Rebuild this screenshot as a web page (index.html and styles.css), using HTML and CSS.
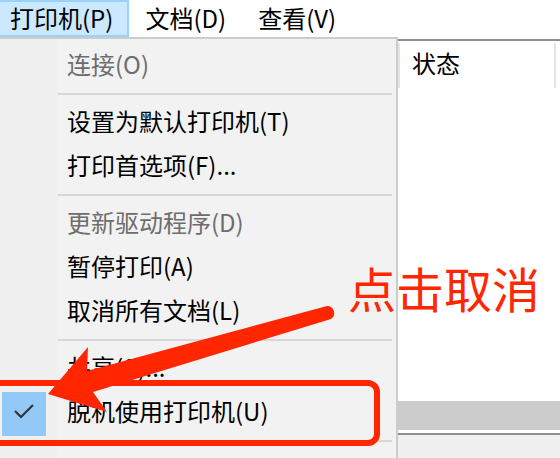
FILE: index.html
```html
<!DOCTYPE html>
<html lang="zh-CN">
  <head>
    <meta charset="UTF-8" />
    <title>打印机队列</title>
    <link rel="stylesheet" href="styles.css">
  </head>
  <body>
    <div class="page">
      <nav class="menubar">
        <span class="menubar-item active">打印机(P)</span>
        <span class="menubar-item">文档(D)</span>
        <span class="menubar-item">查看(V)</span>
      </nav>

      <div class="workspace">
        <!-- print queue window behind the open menu -->
        <div class="listview">
          <div class="list-header">
            <div class="col col-name"></div>
            <div class="col col-status">状态</div>
          </div>
          <div class="list-body"></div>
          <div class="hscroll"></div>
          <div class="statusbar"></div>
        </div>

        <ul class="menu">
          <li class="menu-item disabled"><span class="mark"></span><span class="label">连接(O)</span></li>
          <li class="menu-sep"></li>
          <li class="menu-item"><span class="mark"></span><span class="label">设置为默认打印机(T)</span></li>
          <li class="menu-item"><span class="mark"></span><span class="label">打印首选项(F)...</span></li>
          <li class="menu-sep"></li>
          <li class="menu-item disabled"><span class="mark"></span><span class="label">更新驱动程序(D)</span></li>
          <li class="menu-item"><span class="mark"></span><span class="label">暂停打印(A)</span></li>
          <li class="menu-item"><span class="mark"></span><span class="label">取消所有文档(L)</span></li>
          <li class="menu-sep"></li>
          <li class="menu-item"><span class="mark"></span><span class="label">共享(S)...</span></li>
          <li class="menu-item checked">
            <span class="mark">
              <svg width="44" height="44" viewBox="0 0 44 44">
                <path d="M13 19 L19 25 L31 13" fill="none" stroke="#333" stroke-width="2.2" />
              </svg>
            </span>
            <span class="label">脱机使用打印机(U)</span>
          </li>
          <li class="menu-sep"></li>
        </ul>
      </div>

      <!-- red annotations -->
      <div class="callout-box"></div>
      <div class="callout-text">点击取消</div>
      <svg class="callout-arrow" width="560" height="458" viewBox="0 0 560 458">
        <path d="M48 394 L88 347 L87 371 L327 306 A7.1 7.1 0 0 1 331 319 L93 392 L107 412 Z" fill="#ff2600" />
      </svg>
    </div>
  </body>
</html>
```

FILE: styles.css
```css
body {
  margin: 0;
  background-color: #ffffff;
  font-family: "Noto Sans CJK SC", "Noto Sans", sans-serif;
  font-size: 24px;
  color: #000000;
}

.page {
  position: relative;
  width: 560px;
  height: 458px;
  overflow: hidden;
}

/* top menu bar */
.menubar {
  display: flex;
  height: 37px;
  margin-left: -6px;
}

.menubar-item {
  height: 33px;
  line-height: 31px;
  padding: 0 14px;
  border: 2px solid transparent;
  white-space: nowrap;
}

.menubar-item.active {
  background-color: #cce8ff;
  border-color: #99d1ff;
}

.workspace {
  position: relative;
  height: 421px;
}

/* list view of the print queue */
.listview {
  display: flex;
  flex-direction: column;
  height: 100%;
  padding-top: 2px;
  box-sizing: border-box;
}

.list-header {
  display: flex;
  height: 49px;
  border-top: 2px solid #8c9096;
}

.col-name {
  width: 398px;
}

.col-status {
  width: 158px;
  margin: 2px 0;
  padding-left: 12px;
  line-height: 39px;
  border-left: 2px solid #e5e5e5;
  border-right: 2px solid #e5e5e5;
  box-sizing: border-box;
}

.list-body {
  height: 311px;
}

.hscroll {
  height: 29px;
  background-color: #cccccc;
  margin-bottom: 3px;
}

.statusbar {
  flex-grow: 1;
  border-top: 2px solid #8c9096;
  background-color: #f0f0f0;
}

/* dropdown menu */
.menu {
  position: absolute;
  top: 0;
  left: 0;
  width: 398px;
  height: 480px;
  margin: 0;
  padding: 5px 0 0 0;
  list-style: none;
  box-sizing: border-box;
  border-top: 2px solid #cccccc;
  border-right: 2px solid #cccccc;
  background: linear-gradient(to right, #f0f0f0 58px, #f2f2f2 58px);
}

.menu-item {
  display: flex;
  align-items: center;
  height: 44px;
  white-space: nowrap;
}

.menu-item .label {
  margin-bottom: 5px;
}

.menu-item.disabled {
  color: #6d6d6d;
}

.mark {
  width: 44px;
  height: 44px;
  margin: 2px 21px 0 2px;
  flex-shrink: 0;
}

.checked .mark {
  background-color: #93c9f6;
}

.mark svg {
  display: block;
}

.menu-sep {
  height: 13px;
  margin: 0 4px 0 58px;
  background: linear-gradient(#d7d7d7, #d7d7d7) 0 5px / 100% 2px no-repeat;
}

/* annotations */
.callout-box {
  position: absolute;
  left: -20px;
  top: 380px;
  width: 400px;
  height: 66px;
  box-sizing: border-box;
  border: 6px solid #ff2600;
  border-radius: 12px;
}

.callout-text {
  position: absolute;
  left: 348px;
  top: 263px;
  font-size: 48px;
  line-height: 48px;
  color: #ff2600;
  white-space: nowrap;
}

.callout-arrow {
  position: absolute;
  left: 0;
  top: 0;
  pointer-events: none;
}
```
